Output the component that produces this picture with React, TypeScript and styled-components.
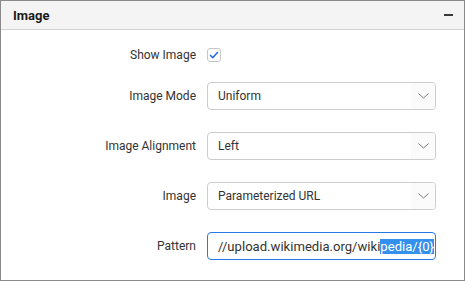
import React from 'react';
import styled, { createGlobalStyle } from 'styled-components';

const GlobalStyle = createGlobalStyle`
  html, body {
    margin: 0;
    padding: 0;
    background: #ffffff;
  }
  body {
    font-family: Roboto, "Liberation Sans", Arial, sans-serif;
    color: #333333;
  }
`;

const Panel = styled.div`
  box-sizing: border-box;
  width: 465px;
  height: 281px;
  border: 1px solid #8a8a8a;
  background: #ffffff;
  overflow: hidden;
`;

const PanelHeader = styled.div`
  display: flex;
  align-items: center;
  justify-content: space-between;
  height: 28px;
  padding: 0 11px 0 12px;
  background: #f4f4f4;
  border-bottom: 1px solid #d2d2d2;
`;

const Title = styled.span`
  font-size: 13px;
  font-weight: 700;
  color: #1a1a1a;
`;

const Collapse = styled.span`
  display: block;
  width: 9px;
  height: 2px;
  background: #3a3a3a;
`;

const Body = styled.div`
  display: flex;
  flex-direction: column;
  padding-top: 11px;
`;

const Field = styled.div<{ $spacing: number }>`
  display: grid;
  grid-template-columns: 195px 229px;
  column-gap: 11px;
  align-items: center;
  height: 28px;
  margin-top: ${(p) => p.$spacing}px;
`;

const Label = styled.label`
  text-align: right;
  font-size: 12px;
  color: #333333;
`;

const CheckBox = styled.span`
  box-sizing: border-box;
  display: flex;
  align-items: center;
  justify-content: center;
  width: 14px;
  height: 14px;
  border: 1px solid #c6c6c6;
  border-radius: 3px;
  background: #ffffff;
`;

const Select = styled.div`
  box-sizing: border-box;
  display: flex;
  align-items: center;
  height: 28px;
  border: 1px solid #cccccc;
  border-radius: 4px;
  background: #ffffff;
  overflow: hidden;
`;

const SelectValue = styled.span`
  flex: 1;
  padding-left: 10px;
  font-size: 12px;
  color: #333333;
  white-space: nowrap;
`;

const Arrow = styled.span`
  display: flex;
  align-items: center;
  justify-content: center;
  width: 24px;
  height: 100%;
  background: #fbfbfb;
`;

const TextInput = styled.div`
  box-sizing: border-box;
  display: flex;
  align-items: center;
  height: 28px;
  padding-left: 10px;
  border: 1px solid #2678e4;
  border-radius: 4px;
  background: #ffffff;
  font-size: 13.1px;
  color: #333333;
  white-space: nowrap;
  overflow: hidden;
`;

const Selected = styled.span`
  background: #3390ec;
  color: #ffffff;
`;

const Chevron = () => (
  <svg width="11" height="6" viewBox="0 0 11 6" fill="none">
    <path d="M0.5 0.5 L5.5 5 L10.5 0.5" stroke="#7a7a7a" strokeWidth="1" />
  </svg>
);

const Check = () => (
  <svg width="10" height="8" viewBox="0 0 10 8" fill="none">
    <path d="M1 4 L3.8 6.6 L9 1" stroke="#2a6fe0" strokeWidth="1.6" />
  </svg>
);

const selects = [
  { label: 'Image Mode', value: 'Uniform' },
  { label: 'Image Alignment', value: 'Left' },
  { label: 'Image', value: 'Parameterized URL' },
];

const App: React.FC = () => {
  return (
    <>
      <GlobalStyle />
      <Panel>
        <PanelHeader>
          <Title>Image</Title>
          <Collapse />
        </PanelHeader>
        <Body>
          <Field $spacing={0}>
            <Label>Show Image</Label>
            <CheckBox>
              <Check />
            </CheckBox>
          </Field>
          {selects.map((item, i) => (
            <Field key={item.label} $spacing={i === 0 ? 13 : 22}>
              <Label>{item.label}</Label>
              <Select>
                <SelectValue>{item.value}</SelectValue>
                <Arrow>
                  <Chevron />
                </Arrow>
              </Select>
            </Field>
          ))}
          <Field $spacing={22}>
            <Label>Pattern</Label>
            <TextInput>
              //upload.wikimedia.org/wiki<Selected>pedia/{'{0}'}</Selected>
            </TextInput>
          </Field>
        </Body>
      </Panel>
    </>
  );
};

export default App;
